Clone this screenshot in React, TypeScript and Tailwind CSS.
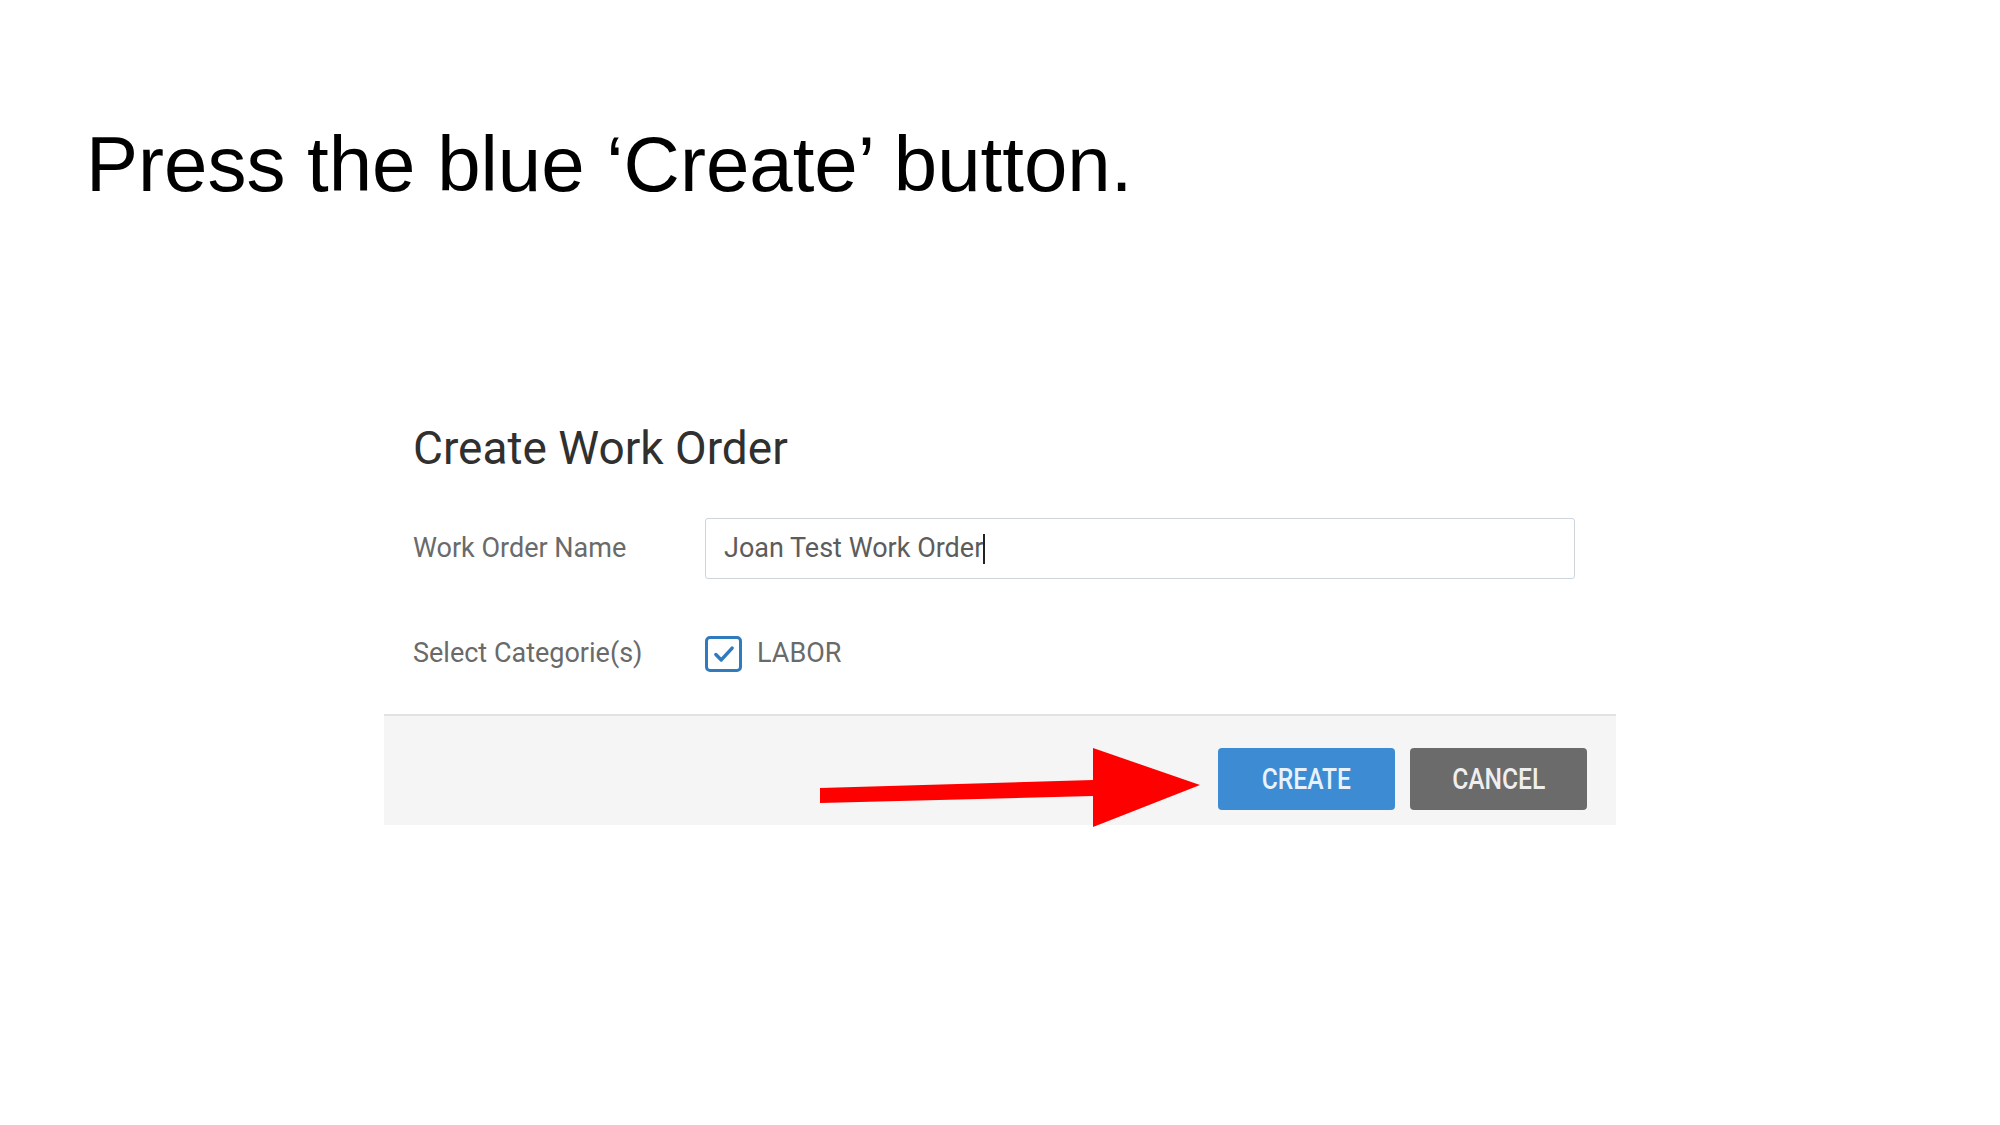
import React from "react";

// Slide: instruction heading + screenshot of the "Create Work Order" dialog
export default function App() {
  return (
    <div className="relative w-[2000px] h-[1125px] bg-white overflow-hidden">
      <h1 className="pt-[125px] pl-[86px] text-[78px] leading-none text-black font-['Liberation_Sans',Arial,sans-serif] font-normal">
        Press the blue ‘Create’ button.
      </h1>

      {/* Dialog */}
      <div className="mt-[222px] ml-[384px] w-[1232px] font-['Roboto',sans-serif]">
        <div className="pl-[29px]">
          <h2 className="text-[46px] leading-none text-[#303030] font-normal">Create Work Order</h2>

          <div className="mt-[47px] flex items-center h-[61px]">
            <div className="w-[292px] text-[27px] leading-none text-[#6a6a6a]">Work Order Name</div>
            <div className="flex items-center w-[870px] h-[61px] border border-[#cdd5dd] rounded-[3px] pl-[18px] bg-white">
              <span className="text-[27px] leading-none text-[#5c5c5c]">Joan Test Work Order</span>
              <span className="w-[2px] h-[30px] bg-[#222]" />
            </div>
          </div>

          <div className="mt-[57px] flex items-center h-[35px]">
            <div className="w-[292px] text-[27px] leading-none text-[#6a6a6a]">Select Categorie(s)</div>
            <div className="flex items-center gap-[15px]">
              <div className="w-[37px] h-[36px] border-[3px] border-[#2f7bbd] rounded-[5px] flex items-center justify-center">
                <svg width="26" height="26" viewBox="0 0 24 24" fill="none">
                  <path d="M4.5 12.5 L9.5 17.5 L19.5 6.5" stroke="#2f7bbd" strokeWidth="3.2" strokeLinecap="round" strokeLinejoin="round" />
                </svg>
              </div>
              <span className="text-[27px] leading-none text-[#6a6a6a]">LABOR</span>
            </div>
          </div>
        </div>

        {/* Footer */}
        <div className="mt-[43px] border-t-2 border-[#e2e2e2] bg-[#f5f5f5] pt-[32px] pb-[15px] pr-[29px] flex justify-end gap-[15px]">
          <button className="w-[177px] h-[62px] rounded-[4px] bg-[#3c8bd3] flex items-center justify-center">
            <span className="inline-block scale-x-[0.82] text-[30px] leading-none font-medium text-[#e8f2fc]">CREATE</span>
          </button>
          <button className="w-[177px] h-[62px] rounded-[4px] bg-[#6b6b6b] flex items-center justify-center">
            <span className="inline-block scale-x-[0.82] text-[30px] leading-none font-medium text-[#efefef]">CANCEL</span>
          </button>
        </div>
      </div>

      {/* Red annotation arrow */}
      <svg className="absolute left-0 top-0 pointer-events-none" width="2000" height="1125" viewBox="0 0 2000 1125">
        <polygon
          points="820,788 1093,780 1093,748 1200,785 1093,827 1093,796 820,803"
          fill="#ff0000"
        />
      </svg>
    </div>
  );
}
